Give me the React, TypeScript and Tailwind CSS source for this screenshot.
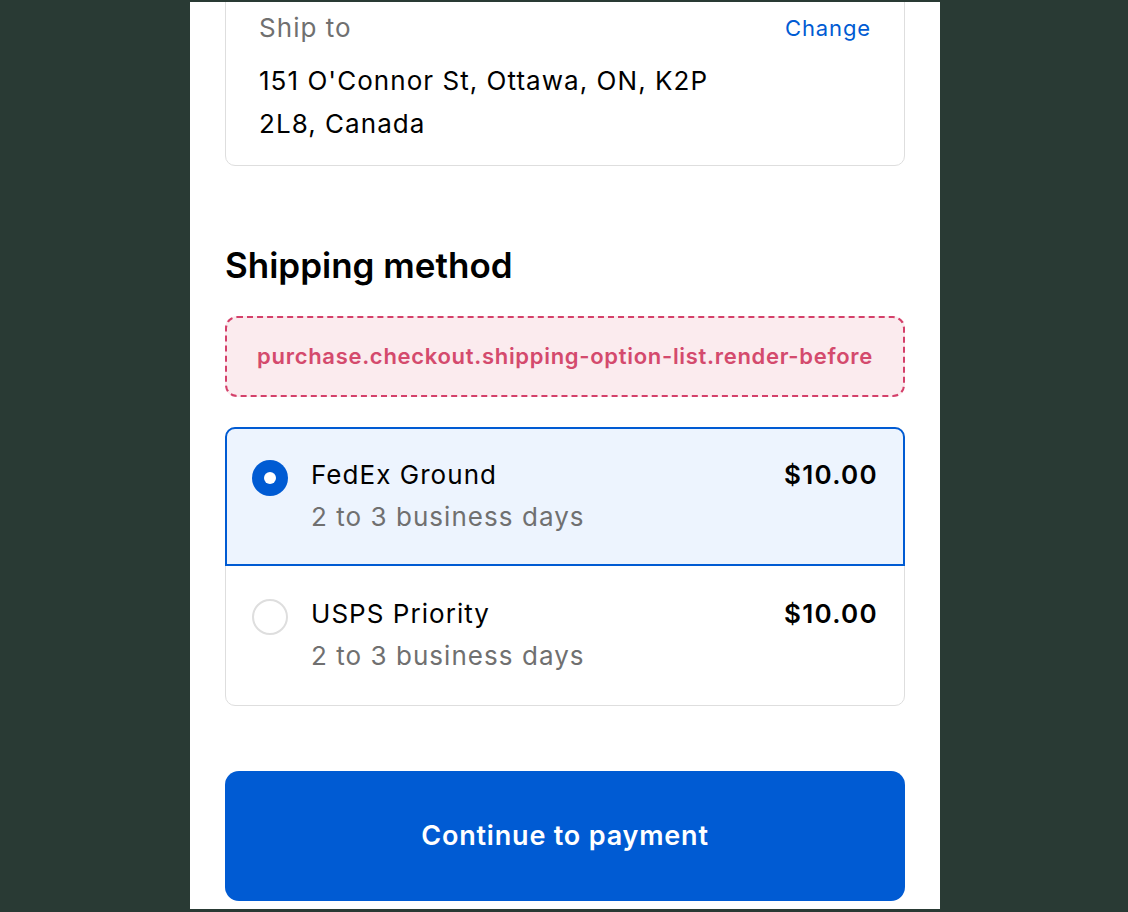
import React from 'react';

interface ShippingOption {
  name: string;
  eta: string;
  price: string;
}

const options: ShippingOption[] = [
  { name: 'FedEx Ground', eta: '2 to 3 business days', price: '$10.00' },
  { name: 'USPS Priority', eta: '2 to 3 business days', price: '$10.00' },
];

function Radio({ checked }: { checked: boolean }) {
  if (checked) {
    return (
      <span className="flex items-center justify-center w-[36px] h-[36px] rounded-full bg-[#005bd3] shrink-0">
        <span className="block w-[12px] h-[12px] rounded-full bg-white" />
      </span>
    );
  }
  return <span className="block w-[36px] h-[36px] rounded-full border-2 border-[#dedede] bg-white shrink-0" />;
}

export default function App() {
  return (
    <div className="min-h-[912px] bg-[#293a34] font-['Inter','Liberation_Sans',sans-serif] pt-[2px]">
      <div className="w-[750px] h-[907px] bg-white overflow-hidden ml-[190px] px-[35px]">
        {/* Ship to card, scrolled past its top */}
        <div className="-mt-[12px] border border-[#dedede] rounded-[10px] pt-[22px] pb-[20px] px-[33px]">
          <div className="flex justify-between items-start">
            <div className="text-[26px] leading-[30px] tracking-[0.04em] text-[#707070]">Ship to</div>
            <a className="text-[22px] leading-[30px] tracking-[0.04em] text-[#005bd3]">Change</a>
          </div>
          <div className="mt-[16px] max-w-[490px] text-[26px] leading-[43px] tracking-[0.04em] text-black">
            151 O'Connor St, Ottawa, ON, K2P 2L8, Canada
          </div>
        </div>

        <h2 className="mt-[79px] text-[35px] leading-[40px] font-semibold text-black">
          Shipping method
        </h2>

        <div className="mt-[31px] h-[81px] flex items-center justify-center rounded-[12px] border-2 border-dashed border-[#d4406a] bg-[#fbebee]">
          <span className="text-[22px] font-semibold tracking-[0.7px] text-[#d44a6d]">
            purchase.checkout.shipping-option-list.render-before
          </span>
        </div>

        <div className="mt-[30px] rounded-[10px] border border-[#dedede]">
          {options.map((opt, i) => {
            const selected = i === 0;
            return (
              <div
                key={opt.name}
                className={
                  selected
                    ? 'flex items-start gap-[23px] h-[139px] pt-[29px] px-[25px] bg-[#edf4fe] border-2 border-[#005bd3] rounded-t-[10px] -m-px'
                    : 'flex items-start gap-[23px] h-[140px] pt-[32px] px-[26px]'
                }
              >
                <div className="pt-[2px]">
                  <Radio checked={selected} />
                </div>
                <div className="flex-1">
                  <div className="text-[26px] leading-[34px] tracking-[0.04em] text-black">{opt.name}</div>
                  <div className="mt-[8px] text-[26px] leading-[34px] tracking-[0.04em] text-[#707070]">{opt.eta}</div>
                </div>
                <div className="text-[26px] leading-[34px] font-semibold tracking-[0.05em] text-black">{opt.price}</div>
              </div>
            );
          })}
        </div>

        <button className="mt-[65px] w-full h-[130px] rounded-[14px] bg-[#005bd3] text-white text-[27px] font-semibold tracking-[0.03em]">
          Continue to payment
        </button>
      </div>
    </div>
  );
}
